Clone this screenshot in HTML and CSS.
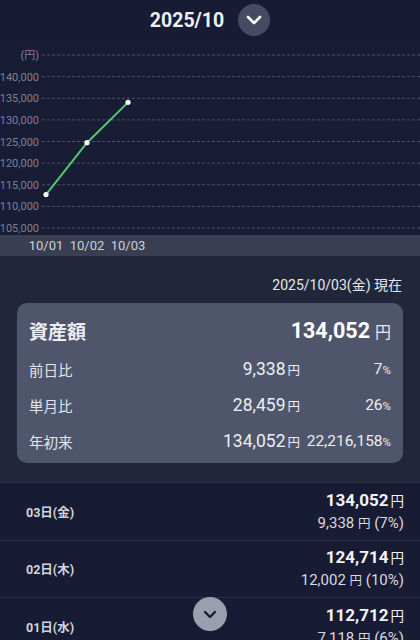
FILE: index.html
```html
<!DOCTYPE html>
<html lang="ja">
<head>
<meta charset="utf-8">
<link rel="stylesheet" href="styles.css">
</head>
<body>
<div class="page">
  <header class="header">
    <h1 class="title">2025/10</h1>
    <button class="month-btn" aria-label="月を選択">
      <svg width="16" height="10" viewBox="0 0 16 10"><path d="M2 2 L8 8 L14 2" fill="none" stroke="#ffffff" stroke-width="2.6" stroke-linecap="round" stroke-linejoin="round"/></svg>
    </button>
  </header>

  <div class="chart">
    <svg width="420" height="195" viewBox="0 0 420 195" class="chart-svg">
      <g class="grid" stroke="#4a4f68" stroke-width="1" stroke-dasharray="3 2">
        <line x1="42" y1="15" x2="420" y2="15"/>
        <line x1="42" y1="36.6" x2="420" y2="36.6"/>
        <line x1="42" y1="58.25" x2="420" y2="58.25"/>
        <line x1="42" y1="79.9" x2="420" y2="79.9"/>
        <line x1="42" y1="101.5" x2="420" y2="101.5"/>
        <line x1="42" y1="123.1" x2="420" y2="123.1"/>
        <line x1="42" y1="144.75" x2="420" y2="144.75"/>
        <line x1="42" y1="166.4" x2="420" y2="166.4"/>
        <line x1="42" y1="188" x2="420" y2="188"/>
      </g>
      <g class="ylabels" fill="#7d8196" font-size="11" text-anchor="end">
        <text x="39" y="19">(円)</text>
        <text x="39" y="40.6">140,000</text>
        <text x="39" y="62.25">135,000</text>
        <text x="39" y="83.9">130,000</text>
        <text x="39" y="105.5">125,000</text>
        <text x="39" y="127.1">120,000</text>
        <text x="39" y="148.75">115,000</text>
        <text x="39" y="170.4">110,000</text>
        <text x="39" y="192">105,000</text>
      </g>
      <polyline points="46,154.6 87,102.7 128,62.35" fill="none" stroke="#4fc96b" stroke-width="2"/>
      <circle cx="46" cy="154.6" r="2.6" fill="#ffffff"/>
      <circle cx="87" cy="102.7" r="2.6" fill="#ffffff"/>
      <circle cx="128" cy="62.35" r="2.6" fill="#ffffff"/>
    </svg>
  </div>

  <div class="xaxis">
    <span class="xlabel">10/01</span>
    <span class="xlabel">10/02</span>
    <span class="xlabel">10/03</span>
  </div>

  <section class="summary">
    <p class="as-of">2025/10/03(金) 現在</p>
    <div class="card">
      <div class="card-main">
        <span class="main-label">資産額</span>
        <span class="main-value">134,052<span class="yen-lg">円</span></span>
      </div>
      <div class="card-row">
        <span class="row-label">前日比</span>
        <span class="row-amount">9,338<span class="yen">円</span></span>
        <span class="row-pct">7<span class="pct">%</span></span>
      </div>
      <div class="card-row">
        <span class="row-label">単月比</span>
        <span class="row-amount">28,459<span class="yen">円</span></span>
        <span class="row-pct">26<span class="pct">%</span></span>
      </div>
      <div class="card-row">
        <span class="row-label">年初来</span>
        <span class="row-amount">134,052<span class="yen">円</span></span>
        <span class="row-pct">22,216,158<span class="pct">%</span></span>
      </div>
    </div>
  </section>

  <ul class="days">
    <li class="day">
      <span class="day-label">03日(金)</span>
      <div class="day-values">
        <span class="day-total">134,052<span class="yen-sm">円</span></span>
        <span class="day-diff">9,338 <span class="yen-xs">円</span> (7%)</span>
      </div>
    </li>
    <li class="day">
      <span class="day-label">02日(木)</span>
      <div class="day-values">
        <span class="day-total">124,714<span class="yen-sm">円</span></span>
        <span class="day-diff">12,002 <span class="yen-xs">円</span> (10%)</span>
      </div>
    </li>
    <li class="day">
      <span class="day-label">01日(水)</span>
      <div class="day-values">
        <span class="day-total">112,712<span class="yen-sm">円</span></span>
        <span class="day-diff">7,118 <span class="yen-xs">円</span> (6%)</span>
      </div>
    </li>
  </ul>

  <button class="fab" aria-label="下へ">
    <svg width="14" height="9" viewBox="0 0 14 9"><path d="M2 2 L7 7 L12 2" fill="none" stroke="#1b1e32" stroke-width="2.4" stroke-linecap="round" stroke-linejoin="round"/></svg>
  </button>
</div>
</body>
</html>
```

FILE: styles.css
```css
* { box-sizing: border-box; }
html, body {
  margin: 0;
  padding: 0;
  background: #171b33;
}
body {
  font-family: Roboto, "Noto Sans CJK JP", "Noto Sans", sans-serif;
  color: #e8e9ee;
}
.page {
  position: relative;
  width: 420px;
  height: 640px;
  overflow: hidden;
  background: #171b33;
}
.header {
  height: 40px;
  display: flex;
  align-items: center;
  justify-content: center;
  gap: 14px;
  background: #171b33;
}
.title {
  margin: 0;
  font-size: 19.5px;
  font-weight: 700;
  color: #eef0f4;
}
.month-btn {
  width: 32px;
  height: 32px;
  border-radius: 50%;
  border: none;
  padding: 0;
  background: #464b63;
  display: flex;
  align-items: center;
  justify-content: center;
}
.chart {
  height: 195px;
  background: #181c34;
}
.chart-svg {
  display: block;
  font-family: Roboto, "Noto Sans CJK JP", sans-serif;
}
.xaxis {
  height: 21px;
  background: #393e52;
  display: flex;
  align-items: center;
  padding-left: 25.5px;
}
.xlabel {
  width: 41px;
  text-align: center;
  font-size: 13px;
  color: #cfd1d9;
}
.summary {
  background: #21263b;
  padding: 20px 17px 19px;
}
.as-of {
  margin: 0 1px 9px 0;
  text-align: right;
  font-size: 14px;
  line-height: 18px;
  color: #e6e7ec;
}
.card {
  background: #4f566c;
  border-radius: 10px;
  padding: 10px 12px 4px;
}
.card-main {
  height: 34px;
  margin-bottom: 4px;
  display: flex;
  align-items: center;
  justify-content: space-between;
}
.main-label {
  font-size: 19px;
  font-weight: 700;
  color: #eceef2;
}
.main-value {
  font-size: 21.5px;
  font-weight: 700;
  color: #ffffff;
}
.yen-lg {
  font-size: 16px;
  font-weight: 400;
  margin-left: 5px;
  color: #e8e9ee;
}
.card-row {
  height: 36px;
  display: grid;
  grid-template-columns: 1fr auto 91px;
  align-items: center;
  color: #eceef2;
}
.row-label {
  font-size: 14.5px;
  color: #e3e5ea;
}
.row-amount {
  text-align: right;
  font-size: 17.5px;
}
.yen {
  font-size: 12.5px;
  margin-left: 2px;
}
.row-pct {
  text-align: right;
  font-size: 15.5px;
}
.pct {
  font-size: 11.5px;
}
.days {
  list-style: none;
  margin: 0;
  padding: 0;
  background: #171b33;
}
.day {
  height: 57.5px;
  border-top: 1px solid #2b3049;
  display: flex;
  align-items: center;
  justify-content: space-between;
  padding: 0 16px 0 26px;
}
.day-label {
  font-size: 12.5px;
  font-weight: 700;
  color: #d2d4dc;
}
.day-values {
  display: flex;
  flex-direction: column;
  align-items: flex-end;
  gap: 1px;
}
.day-total {
  font-size: 17px;
  font-weight: 700;
  color: #f2f3f6;
  line-height: 22px;
}
.yen-sm {
  font-size: 13.5px;
  font-weight: 400;
  margin-left: 2px;
}
.day-diff {
  font-size: 15px;
  color: #d8dae1;
  line-height: 20px;
}
.yen-xs {
  font-size: 12.5px;
}
.fab {
  position: absolute;
  left: 193px;
  top: 597px;
  width: 34px;
  height: 34px;
  border-radius: 50%;
  border: none;
  padding: 0;
  background: #9b9eae;
  display: flex;
  align-items: center;
  justify-content: center;
}
```
